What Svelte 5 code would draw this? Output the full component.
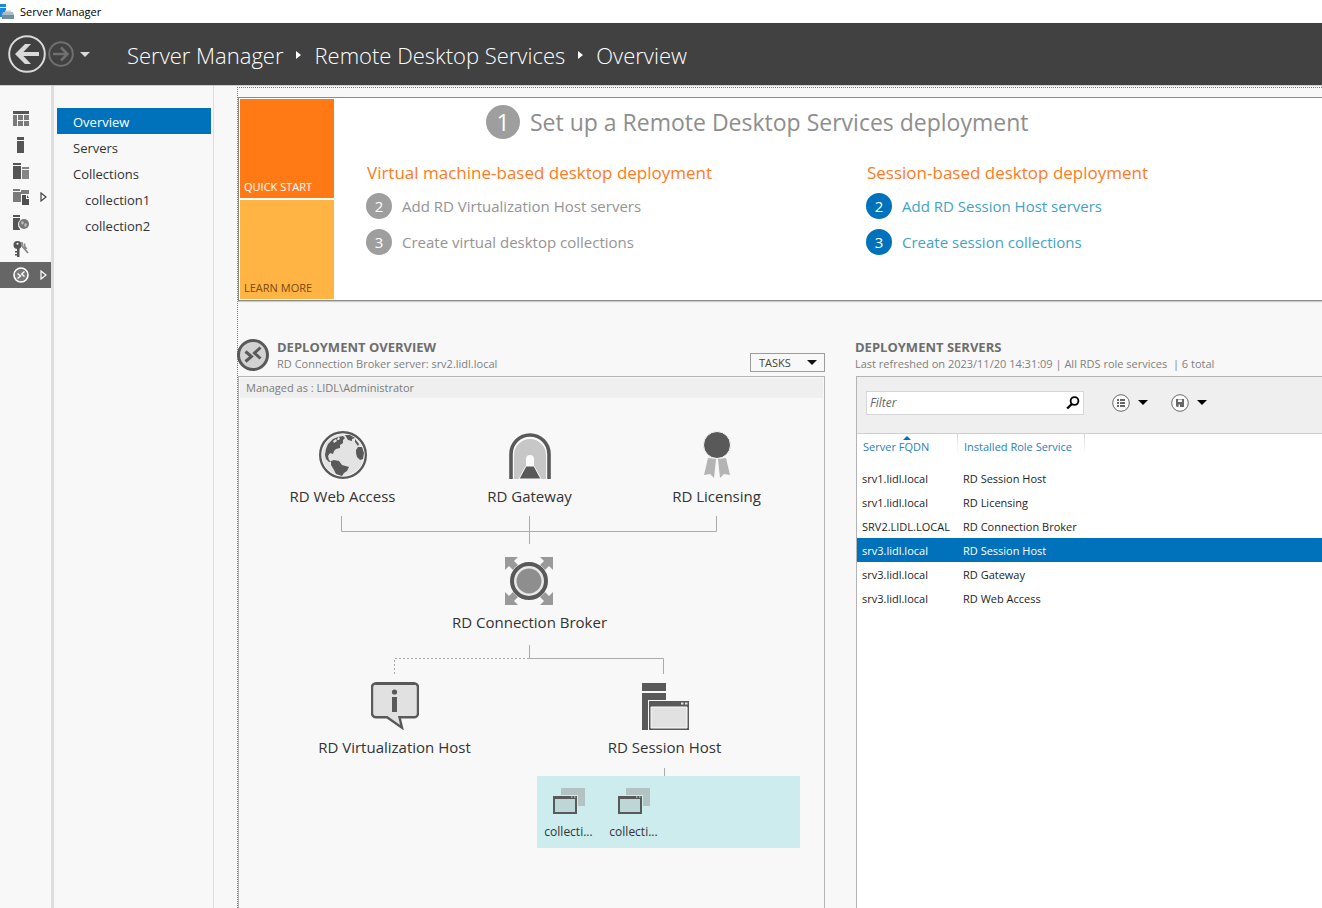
<script>
  const rail = ['dashboard', 'local', 'servers', 'files', 'iis', 'keys', 'rds'];
  const railLabels = {
    dashboard: 'Dashboard', local: 'Local Server', servers: 'All Servers',
    files: 'File and Storage Services', iis: 'IIS', keys: 'Remote Access', rds: 'Remote Desktop Services'
  };
  const sections = [
    { name: 'Overview', active: true },
    { name: 'Servers' },
    { name: 'Collections' },
    { name: 'collection1', sub: true },
    { name: 'collection2', sub: true }
  ];
  const tracks = [
    {
      title: 'Virtual machine-based desktop deployment', enabled: false,
      steps: ['Add RD Virtualization Host servers', 'Create virtual desktop collections']
    },
    {
      title: 'Session-based desktop deployment', enabled: true,
      steps: ['Add RD Session Host servers', 'Create session collections']
    }
  ];
  const servers = [
    ['srv1.lidl.local', 'RD Session Host'],
    ['srv1.lidl.local', 'RD Licensing'],
    ['SRV2.LIDL.LOCAL', 'RD Connection Broker'],
    ['srv3.lidl.local', 'RD Session Host'],
    ['srv3.lidl.local', 'RD Gateway'],
    ['srv3.lidl.local', 'RD Web Access']
  ];
  const shorten = (name) => (name.length > 9 ? name.slice(0, 8) + '...' : name);
  let selected = $state(3);
  let filter = $state('');
</script>

{#snippet caret()}
  <svg class="caret" width="10" height="5" viewBox="0 0 10 5" aria-hidden="true"><path d="M0 0h10L5 5z" fill="currentColor" /></svg>
{/snippet}

{#snippet railIcon(kind)}
  <svg width="16" height="16" viewBox="0 0 16 16" aria-hidden="true">
    {#if kind === 'dashboard'}
      <path d="M0 0h16v3H0z" fill="#555" />
      <path d="M0 4h4v11H0zM5 4h5v5H5zM11 4h5v5h-5zM5 10h5v5H5zM11 10h5v5h-5z" fill="#7b7b7b" />
    {:else if kind === 'local'}
      <path d="M4 0h7v3H4zM4 4h7v12H4z" fill="#555" />
    {:else if kind === 'servers'}
      <path d="M0 0h8v2H0zM0 3h8v13H0z" fill="#555" />
      <path d="M9 4h7v2H9zM9 7h7v9H9z" fill="#858585" />
    {:else if kind === 'files'}
      <path d="M0 0h7v2H0zM0 3h8v10H0zM8 1h8v4H8z" fill="#7b7b7b" />
      <path d="M9 6h4v4h3v6H9z" fill="#4f4f4f" />
      <path d="M14 6l2 3h-2z" fill="#4f4f4f" />
    {:else if kind === 'iis'}
      <path d="M0 0h7v2H0zM0 3h7v2a6 6 0 0 0-2 4 6 6 0 0 0 2 5v1H0z" fill="#555" />
      <circle cx="11" cy="9" r="5" fill="#777" />
      <path d="M8 7l2-1 1 2-2 2zM12 8l2 1-1 3-2-1z" fill="#bdbdbd" />
    {:else if kind === 'keys'}
      <circle cx="4.500" cy="4" r="4" fill="#555" />
      <circle cx="4.500" cy="2.800" r="1" fill="#f8f8f8" />
      <path d="M4 7h2.500v9H4zM2 10h3v1.500H2zM2 13h3v1.500H2z" fill="#555" />
      <path d="M9 1v4l6 7M11.500 2.500V5l2 3" fill="none" stroke="#8a8a8a" stroke-width="1.800" />
    {:else}
      <circle cx="8" cy="8" r="7" fill="#7a7a7a" stroke="#fff" stroke-width="1.600" />
      <path d="M4.500 6.500L7.500 9l-3 2.500M11.500 4.500L8.700 7l2.800 2.500" fill="none" stroke="#fff" stroke-width="1.400" />
    {/if}
  </svg>
{/snippet}

{#snippet node(kind, label)}
  <div class="node">
    <svg width="48" height="48" viewBox="0 0 48 48" aria-hidden="true">
      {#if kind === 'web'}
        <circle cx="24" cy="24" r="22.800" fill="#e3e3e3" stroke="#595959" stroke-width="2.400" />
        <circle cx="24" cy="24" r="21" fill="none" stroke="#f4f4f4" />
        <g fill="#595959">
          <path d="M7 18l2-5 5-5 5-2 5-1 2 2-2 2 0 3-3 2 0 3-4 1-2 2-1 3-3-1-2 3 1 4 2 2-2 0-3-3-1-4z" />
          <path d="M26 4l5 0 5 3-3 1 0 2-4-1zM36 8l4 5-1 2-3-4z" />
          <path d="M37 19l2-3 4 0 2 6-1 6-3 1-3-3-1-4z" />
          <path d="M12 30l3-1 5 1 3 4 7 2-2 4-3 2-2 3-6-2-2-4-3-5z" />
        </g>
        <path d="M14 10l3-2 1 2-3 2zM19 6l2 1-1 2-2 0z" fill="#e3e3e3" />
      {:else if kind === 'gateway'}
        <path d="M5 48V23a19 19 0 0 1 38 0v25" fill="#fafafa" stroke="#595959" stroke-width="3.600" />
        <path d="M8 48V24a16 16 0 0 1 32 0v24z" fill="#c7c7c7" />
        <path d="M20 37v-9a4 4 0 0 1 8 0v9z" fill="#fafafa" />
        <path d="M13 48l7-13h8l7 13z" fill="#595959" stroke="#fafafa" />
      {:else if kind === 'license'}
        <path d="M15 27l8 1-2 19-4-4-6 1zM33 27l-8 1 2 19 4-4 6 1z" fill="#b4b4b4" />
        <circle cx="24" cy="14" r="13.500" fill="#595959" stroke="#f8f8f8" />
      {:else if kind === 'broker'}
        <path d="M0 0h13L9 4l35 35 4-4v13H35l4-4L4 9l-4 4z" fill="#999" />
        <path d="M48 0v13l-4-4L9 44l4 4H0V35l4 4L39 4l-4-4z" fill="#999" />
        <path d="M8 4l8 8-4 4-8-8zM40 4l4 4-8 8-4-4zM8 44l-4-4 8-8 4 4zM40 44l4-4-8-8-4 4z" fill="#999" />
        <circle cx="24" cy="24" r="19.500" fill="#f8f8f8" />
        <circle cx="24" cy="24" r="17" fill="#e8e8e8" stroke="#595959" stroke-width="4" />
        <circle cx="24" cy="24" r="12.500" fill="#8e8e8e" />
      {:else if kind === 'virtual'}
        <path d="M5 1.200h38a4 4 0 0 1 4 4v26a4 4 0 0 1-4 4H28.500l2.500 10.500L16 35.200H5a4 4 0 0 1-4-4v-26a4 4 0 0 1 4-4z" fill="#e1e1e1" stroke="#595959" stroke-width="2.400" />
        <path d="M4 1h40v2H4z" fill="#595959" />
        <circle cx="23.500" cy="10" r="2.600" fill="#595959" />
        <path d="M21 15h5v15h-5z" fill="#595959" />
      {:else}
        <path d="M1 1h24v8H1zM1 11h24v7H7v30H1z" fill="#595959" />
        <path d="M8 19h40v29H8z" fill="#595959" />
        <path d="M10 25h36v21H10z" fill="#e1e1e1" stroke="#fafafa" />
        <path d="M40 20.500h2.500v2H40zM44 20.500h2.500v2H44z" fill="#e1e1e1" />
      {/if}
    </svg>
    <span>{label}</span>
  </div>
{/snippet}

<div class="window">
  <div class="titlebar">
    <svg width="15" height="16" viewBox="0 0 15 16" aria-hidden="true">
      <path d="M0 0h6v3H0zM0 4h6v9H0z" fill="#1b87dd" />
      <path d="M5 6.500h6V9H5z" fill="#c6d2d8" />
      <path d="M3 8h10l1 3H2z" fill="#a9bcc6" />
      <path d="M2 11h12v4H2z" fill="#6f8fa0" />
    </svg>
    <span>Server Manager</span>
  </div>

  <header>
    <button class="back" aria-label="Back">
      <svg width="38" height="38" viewBox="0 0 38 38"><circle cx="19" cy="19" r="17.800" fill="none" stroke="#dadada" stroke-width="2" /><path d="M31 19H10" fill="none" stroke="#dadada" stroke-width="4" /><path d="M17 9h6l-9.500 10L23 29h-6L7 19z" fill="#dadada" /></svg>
    </button>
    <button class="forward" aria-label="Forward">
      <svg width="26" height="26" viewBox="0 0 26 26"><circle cx="13" cy="13" r="11.800" fill="none" stroke="#707070" stroke-width="2" /><path d="M5 13h14.500M13 6.500l6.500 6.500-6.500 6.500" fill="none" stroke="#707070" stroke-width="2.600" /></svg>
    </button>
    <button class="history" aria-label="History">{@render caret()}</button>
    <nav class="crumbs" aria-label="Breadcrumb">
      {#each ['Server Manager', 'Remote Desktop Services', 'Overview'] as crumb, i}
        {#if i}<svg width="5" height="8" viewBox="0 0 5 8" aria-hidden="true"><path d="M0 0l5 4-5 4z" fill="#fff" /></svg>{/if}
        <a href="#top">{crumb}</a>
      {/each}
    </nav>
  </header>

  <div class="body">
    <nav class="rail" aria-label="Roles">
      {#each rail as kind}
        <button class:current={kind === 'rds'} aria-label={railLabels[kind]}>
          {@render railIcon(kind)}
          {#if kind === 'files' || kind === 'rds'}
            <svg width="7" height="10" viewBox="0 0 7 10" aria-hidden="true"><path d="M1 1l5 4-5 4z" fill="none" stroke="currentColor" stroke-width="1.200" /></svg>
          {/if}
        </button>
      {/each}
    </nav>

    <nav class="sections" aria-label="Sections">
      {#each sections as s}
        <a href="#top" class:active={s.active} class:sub={s.sub}>{s.name}</a>
      {/each}
    </nav>

    <main>
      <section class="quick">
        <div class="tiles">
          <button class="start">QUICK START</button>
          <button class="learn">LEARN MORE</button>
        </div>
        <div class="guide">
          <h1><span class="badge big">1</span>Set up a Remote Desktop Services deployment</h1>
          <div class="tracks">
            {#each tracks as t}
              <div class="track" class:enabled={t.enabled}>
                <h2>{t.title}</h2>
                {#each t.steps as step, i}
                  <div class="step">
                    <span class="badge">{i + 2}</span>
                    {#if t.enabled}<a href="#top">{step}</a>{:else}<span>{step}</span>{/if}
                  </div>
                {/each}
              </div>
            {/each}
          </div>
        </div>
      </section>

      <div class="panels">
        <section class="overview">
          <div class="head">
            <svg width="32" height="32" viewBox="0 0 32 32" aria-hidden="true">
              <circle cx="16" cy="16" r="14.500" fill="#d2d2d2" stroke="#595959" stroke-width="3" />
              <path d="M8.500 12.500l6 5-6 5M23.500 8.500l-6 5.500 6 5.500" fill="none" stroke="#595959" stroke-width="3" />
            </svg>
            <div class="titles">
              <h3>DEPLOYMENT OVERVIEW</h3>
              <p>RD Connection Broker server: srv2.lidl.local</p>
            </div>
            <button class="tasks">TASKS {@render caret()}</button>
          </div>
          <div class="panel">
            <p class="managed">Managed as : LIDL\Administrator</p>
            <div class="diagram">
              <div class="three">
                {@render node('web', 'RD Web Access')}
                {@render node('gateway', 'RD Gateway')}
                {@render node('license', 'RD Licensing')}
              </div>
              <svg class="wire-top" width="378" height="28" viewBox="0 0 378 28" aria-hidden="true">
                <path d="M.5 0v15.500h375V0M188.500 0v28" fill="none" stroke="#aaa" />
              </svg>
              {@render node('broker', 'RD Connection Broker')}
              <svg class="wire-mid" width="272" height="29" viewBox="0 0 272 29" aria-hidden="true">
                <path d="M135.500 0v13.500h134V29" fill="none" stroke="#aaa" />
                <path d="M135 13.500H.5V29" fill="none" stroke="#aaa" stroke-dasharray="2 2" />
              </svg>
              <div class="two">
                {@render node('virtual', 'RD Virtualization Host')}
                <div class="session">
                  {@render node('session', 'RD Session Host')}
                  <span class="stem"></span>
                  <div class="collections">
                    {#each ['collection1', 'collection2'] as name}
                      <button title={name}>
                        <svg width="34" height="28" viewBox="0 0 34 28" aria-hidden="true">
                          <path d="M9 1h24v18H9z" fill="#b3c3c3" />
                          <path d="M0 8h26v20H0z" fill="#cdeced" />
                          <path d="M1 9h24v18H1z" fill="#595959" />
                          <path d="M3 12h20v13H3z" fill="#bdd7d8" />
                          <path d="M19 9.500h1.500v1H19zM22 9.500h1.500v1H22z" fill="#cdeced" />
                        </svg>
                        <span>{shorten(name)}</span>
                      </button>
                    {/each}
                  </div>
                </div>
              </div>
            </div>
          </div>
        </section>

        <section class="servers">
          <div class="head">
            <div class="titles">
              <h3>DEPLOYMENT SERVERS</h3>
              <p>Last refreshed on 2023/11/20 14:31:09 | All RDS role services &nbsp;| 6 total</p>
            </div>
          </div>
          <div class="panel">
            <div class="toolbar">
              <label class="filter">
                <input type="text" placeholder="Filter" aria-label="Filter" bind:value={filter} />
                <svg width="14" height="14" viewBox="0 0 14 14" aria-hidden="true"><circle cx="8.500" cy="5" r="3.900" fill="none" stroke="#000" stroke-width="1.800" /><path d="M5.800 8L1.200 12.500" stroke="#000" stroke-width="2.400" /></svg>
              </label>
              <button class="tool" aria-label="Saved queries">
                <svg width="18" height="18" viewBox="0 0 18 18" aria-hidden="true"><circle cx="9" cy="9" r="8.300" fill="#fbfbfb" stroke="#6a6a6a" /><path d="M5 5h2v2H5zM8 5h5v2H8zM5 8h2v2H5zM8 8h5v2H8zM5 11h2v2H5zM8 11h5v2H8z" fill="#666" /></svg>
                {@render caret()}
              </button>
              <button class="tool" aria-label="Save query">
                <svg width="18" height="18" viewBox="0 0 18 18" aria-hidden="true"><circle cx="9" cy="9" r="8.300" fill="#fbfbfb" stroke="#6a6a6a" /><path d="M5 5h8v8H6l-1-1z" fill="#666" /><path d="M7 5.500h4V8H7zM7.500 10.500H9V13H7.500z" fill="#f4f4f4" /></svg>
                {@render caret()}
              </button>
            </div>
            <table>
              <colgroup><col class="c1" /><col class="c2" /><col /></colgroup>
              <thead>
                <tr>
                  <th><span class="sort"></span>Server FQDN</th>
                  <th>Installed Role Service</th>
                  <td></td>
                </tr>
              </thead>
              <tbody>
                {#each servers as [fqdn, role], i}
                  <tr class:selected={i === selected} onclick={() => (selected = i)}>
                    <td>{fqdn}</td>
                    <td>{role}</td>
                    <td></td>
                  </tr>
                {/each}
              </tbody>
            </table>
          </div>
        </section>
      </div>
    </main>
  </div>
</div>

<style>
  :global(body) { margin: 0; }
  .window {
    display: flex; flex-direction: column; min-height: 100vh; background: #f8f8f8;
    font-family: "Open Sans", "Noto Sans", sans-serif; font-size: 11px; color: #333; overflow: hidden;
  }
  .window :global(*) { box-sizing: border-box; }
  svg { display: block; flex: none; }
  button { font: inherit; color: inherit; background: none; border: 0; padding: 0; cursor: pointer; }
  a { color: inherit; text-decoration: none; }
  h1, h2, h3, p { margin: 0; }

  .titlebar { display: flex; align-items: center; gap: 5px; height: 23px; background: #fff; color: #000; }

  header { display: flex; align-items: center; height: 62px; padding-left: 8px; background: #414141; color: #fff; }
  .forward { margin-left: 2px; }
  .history { margin: 0 0 0 6px; color: #dadada; }
  .crumbs { display: flex; align-items: center; gap: 13px; margin: 2px 0 0 37px; font-size: 22px; font-weight: 300; white-space: nowrap; }

  .body { display: flex; flex: 1; border-top: 1px solid #cfcfcf; }
  .rail { display: flex; flex-direction: column; width: 54px; padding-top: 20px; border-right: 3px solid #dedede; }
  .rail button { display: flex; align-items: center; gap: 11px; height: 26px; padding-left: 13px; color: #444; }
  .rail .current { background: #666; color: #fff; }

  .sections { display: flex; flex-direction: column; width: 160px; padding: 22px 2px 0 3px; border-right: 1px solid #dedede; font-size: 13px; }
  .sections a { height: 26px; padding-left: 16px; line-height: 28px; }
  .sections .sub { padding-left: 28px; }
  .sections .active { background: #0072bc; color: #fff; }

  main { display: flex; flex-direction: column; flex: 1; min-width: 0; margin: 1px 0 0 23px; border: 0 dotted #7c7c7c; border-width: 1px 0 0 1px; }
  .quick { display: flex; margin-top: 9px; border: 1px solid #8c8c8c; border-right: 0; background: #fff; box-shadow: 0 1px 1px #ccc; }
  .tiles { display: flex; flex-direction: column; gap: 2px; padding: 1px; }
  .tiles button { display: flex; align-items: flex-end; width: 94px; height: 99px; padding: 0 4px 4px; }
  .start { background: #ff7a14; color: #fff; }
  .learn { background: #ffb444; color: #7a4a10; }
  .guide { flex: 1; min-width: 0; padding: 7px 0 0 31px; }
  h1 { display: flex; align-items: center; gap: 10px; margin-left: 120px; font-size: 23px; font-weight: 400; line-height: 34px; color: #8e8e8e; white-space: nowrap; }
  .badge { display: flex; align-items: center; justify-content: center; width: 26px; height: 26px; border-radius: 50%; background: #9e9e9e; color: #fff; font-size: 15px; flex: none; }
  .badge.big { width: 34px; height: 34px; font-size: 23px; }
  .tracks { display: grid; grid-template-columns: 500fr 456fr; margin-top: 22px; }
  h2 { margin: 0 0 8px 1px; font-size: 17px; font-weight: 400; line-height: 24px; color: #ff7a22; }
  .step { display: flex; align-items: center; gap: 10px; height: 26px; margin-bottom: 10px; font-size: 15px; color: #949494; }
  .enabled .badge { background: #0072bc; }
  .enabled .step { color: #3fa3c6; }

  .panels { display: grid; flex: 1; grid-template-columns: 587fr 466fr; gap: 31px; margin-top: 37px; }
  .panels section { display: flex; flex-direction: column; min-width: 0; }
  .head { display: flex; align-items: flex-end; height: 38px; color: #6e6e6e; }
  .overview .head svg { margin: 0 0 5px -1px; }
  .overview .head .titles { margin-left: 8px; flex: 1; }
  .servers .head .titles { margin-left: -1px; }
  .titles { align-self: flex-start; white-space: nowrap; }
  h3 { font-size: 13px; font-weight: 700; line-height: 18px; }
  .titles p { line-height: 16px; color: #808080; }
  .overview .head .tasks { display: flex; align-items: center; justify-content: space-between; width: 75px; height: 19px; margin-bottom: 4px; padding: 0 7px 0 8px; border: 1px solid #9c9c9c; color: #444; }
  .overview .head .tasks :global(svg) { margin: 0; color: #111; }
  .panel { flex: 1; border: 1px solid #b4b4b4; border-bottom: 0; }
  .managed { margin: 1px 1px 0; padding-left: 6px; background: #efefef; line-height: 20px; color: #7b7b7b; }

  .diagram { display: flex; flex-direction: column; align-items: center; padding: 33px 4px 24px 0; }
  .three { display: grid; grid-template-columns: repeat(3, 187px); }
  .two { display: grid; grid-template-columns: repeat(2, 270px); align-items: start; }
  .node { display: flex; flex-direction: column; align-items: center; gap: 7px; font-size: 15px; line-height: 20px; white-space: nowrap; }
  .wire-top { margin: 10px 0 13px; }
  .wire-mid { margin: 13px 0 8px; }
  .session { display: flex; flex-direction: column; }
  .stem { align-self: center; width: 1px; height: 8px; margin-top: 11px; background: #aaa; }
  .collections { display: flex; gap: 15px; height: 72px; margin-left: 7px; padding: 11px 7px 0; background: #cdeced; }
  .collections button { display: flex; flex-direction: column; align-items: center; width: 50px; gap: 8px; font-size: 12px; line-height: 18px; }

  .servers .panel { border-right: 0; background: #fff; }
  .toolbar { display: flex; align-items: center; height: 57px; padding: 0 9px 5px; border-bottom: 1px solid #cfcfcf; background: #efefef; }
  .filter { display: flex; align-items: center; width: 218px; height: 24px; margin-right: 28px; padding-right: 3px; border: 1px solid #d6d6d6; background: #fff; font-size: 12px; }
  .filter input { flex: 1; min-width: 0; height: 22px; padding: 0 3px; border: 0; outline: 0; background: none; font: inherit; font-style: italic; }
  .filter input::placeholder { color: #666; opacity: 1; }
  .tool { display: flex; align-items: center; gap: 8px; margin-right: 23px; color: #000; }
  table { width: 100%; border-collapse: collapse; table-layout: fixed; font-size: 11px; color: #1e1e1e; }
  .c1 { width: 101px; }
  .c2 { width: 127px; }
  th { position: relative; height: 32px; padding: 0 0 8px 6px; font-weight: 400; text-align: left; white-space: nowrap; color: #2a80c4; background: linear-gradient(#d6d6d6, #fff) right top / 1px 20px no-repeat; }
  .sort { position: absolute; top: 2px; left: 46px; border: 4px solid transparent; border-top: 0; border-bottom-color: #0072bc; }
  tbody td { height: 24px; padding: 0 0 0 5px; white-space: nowrap; }
  .selected { background: #0072bc; color: #fff; }
</style>
